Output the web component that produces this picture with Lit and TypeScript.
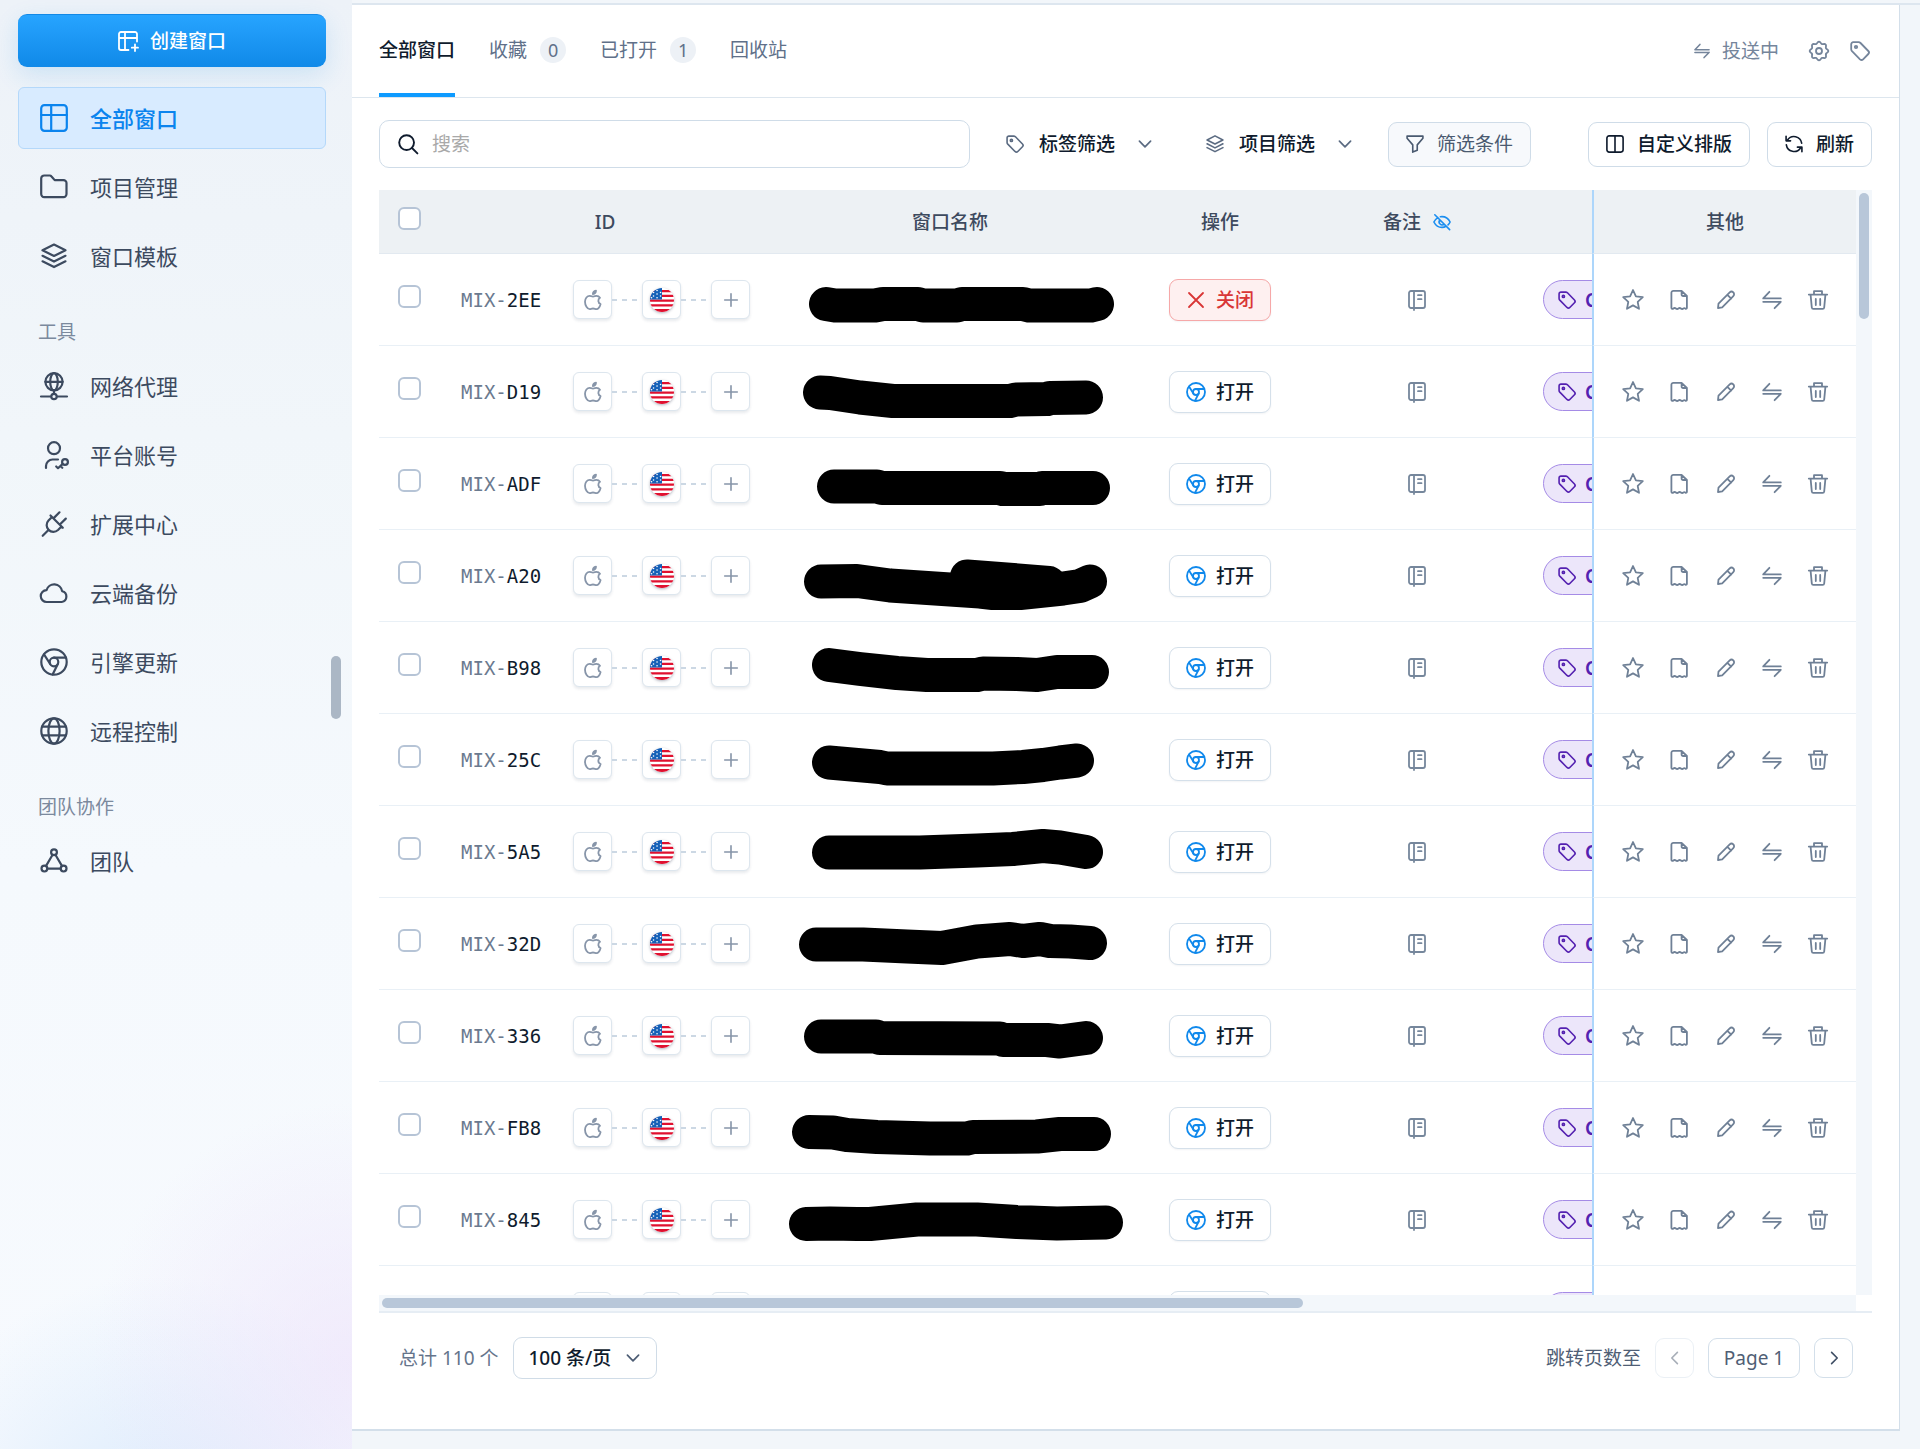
import { LitElement, html, svg, css } from "lit";
import { customElement } from "lit/decorators.js";
import { classMap } from "lit/directives/class-map.js";
import { styleMap } from "lit/directives/style-map.js";

/* Closed outline of a gear with eight rounded teeth, centred on a 20px grid. */
const gearOutline = Array.from({ length: 96 }, (_, i) => {
  const angle = (i / 96) * Math.PI * 2;
  const radius = 8.4 + 0.9 * Math.cos(8 * angle);
  return `${(10 + radius * Math.sin(angle)).toFixed(2)},${(10 - radius * Math.cos(angle)).toFixed(2)}`;
}).join(" ");

/* Outline icons, keyed by name. The large set is drawn on a 28px grid, the small set on a 20px grid. */
const largeIcons: Record<string, unknown> = {
  table: svg`<rect x="1.2" y="1.2" width="25.6" height="25.6" rx="3.2"/><path d="M11.2 1.2v25.6M1.2 11h25.6"/>`,
  folder: svg`<path d="M4.2 2.5h5.6c.6 0 1.1.2 1.5.7l3.4 3.9h8.8a3 3 0 0 1 3 3v11a3 3 0 0 1-3 3H4.2a3 3 0 0 1-3-3V5.500a3 3 0 0 1 3-3z"/>`,
  layers: svg`<path d="M14 2.500 25.500 8.300 14 14 2.500 8.300z"/><path d="M2.500 13.800 14 19.600l11.500-5.800M2.500 19.300 14 25.100l11.500-5.800"/>`,
  proxy: svg`<circle cx="14" cy="9.800" r="8.600"/><ellipse cx="14" cy="9.800" rx="3.800" ry="8.600"/><path d="M5.400 9.800h17.200M14 18.400v3.200M1 24.500h10M17 24.500h10"/><circle cx="14" cy="24.500" r="2.700"/>`,
  account: svg`<circle cx="14" cy="7.200" r="6"/><path d="M6 27v-2a6.500 6.500 0 0 1 6.500-6.500H18"/><circle cx="25" cy="21" r="2.900"/><path d="M22.700 22.900 18 27.200l-1.800-1.700M20.500 25l1.800 1.800"/>`,
  plug: svg`<path d="M10.500 5.500 22.800 17.800M12 7l-3.500 3.500a6.720 6.720 0 0 0 9.500 9.500l3.500-3.500M2.700 25.800l5.500-5.500M14.200 7.600l5.300-5.300M20.600 13.800l5.200-5.200"/>`,
  cloud: svg`<path d="M6.800 23a5.900 5.900 0 0 1-.3-11.800 8 8 0 0 1 15.600 1 5.500 5.500 0 0 1-.4 10.800z"/>`,
  engine: svg`<circle cx="14" cy="14" r="12.700"/><circle cx="14" cy="14" r="4.300"/><path d="M14 9.700h11.800M10.200 16 4 6.400M17.700 16.200 12.600 26.600"/>`,
  globe: svg`<circle cx="14" cy="14" r="12.700"/><ellipse cx="14" cy="14" rx="5.600" ry="12.700"/><path d="M2.200 9.600h23.600M2.200 18.400h23.600"/>`,
  team: svg`<circle cx="14" cy="5.200" r="2.900"/><circle cx="4.400" cy="21.600" r="2.900"/><circle cx="23.600" cy="21.600" r="2.900"/><path d="M12.600 7.800 5.900 19.100M15.400 7.800l6.700 11.300M7.300 21.600h13.400"/>`,
};

const smallIcons: Record<string, unknown> = {
  create: svg`<path d="M19 10.500V3a2 2 0 0 0-2-2H3a2 2 0 0 0-2 2v14a2 2 0 0 0 2 2h7.500M7 1v18M1 7h18M17 13.500v6.500M13.800 16.700H20"/>`,
  swap: svg`<path d="M1.200 8.400h17.600M1.200 8.400 7.400 1.800M18.800 11.800H1.200M18.800 11.800l-6.200 6.400"/>`,
  gear: svg`<circle cx="10" cy="10" r="3"/><polygon points=${gearOutline}/>`,
  tag: svg`<path d="M1.200 3.200v5c0 .8.300 1.400.8 2l8 8.100c1 .9 2.200.9 3.100 0l5.200-5.300c.9-.9.900-2.100 0-3l-7.800-8A2.800 2.800 0 0 0 8.400 1.200H3.200a2 2 0 0 0-2 2z"/><circle cx="6" cy="6" r="1.200"/>`,
  search: svg`<circle cx="8.600" cy="8.600" r="7.400"/><path d="M14 14l5.400 5.400"/>`,
  layers: svg`<path d="M10 1 18.800 5.500 10 10 1.200 5.500z"/><path d="M1.200 9.800 10 14.300l8.800-4.500M1.200 14 10 18.500l8.800-4.500"/>`,
  funnel: svg`<path d="M1.200 1.200h17.600v2.500L12.500 11v6l-5 2v-8L1.200 3.700z"/>`,
  columns: svg`<rect x="1" y="1" width="18" height="18" rx="2.500"/><path d="M10 1v18"/>`,
  refresh: svg`<path d="M18.500 9A8.600 8.600 0 0 0 2.800 5.600M1.200 1.500v5h5M1.500 11a8.600 8.600 0 0 0 15.700 3.400M18.800 18.500v-5h-5"/>`,
  eyeoff: svg`<path d="M5.500 5.200C3.600 6.400 2 8 1 10c1.900 3.800 5.200 6 9 6 1.700 0 3.200-.4 4.600-1.200M8.200 4.200c.6-.1 1.200-.2 1.800-.2 3.800 0 7.100 2.200 9 6-.6 1.200-1.400 2.300-2.300 3.200M7.600 7.800a3.300 3.300 0 0 0 4.700 4.600M2 2l16.500 16.500"/>`,
  apple: svg`<path d="M10 6.700c1-.4 2-.9 3.300-.9 1.700 0 2.900.7 3.700 1.900-2.400 1.600-2.200 5.300.6 6.300-.7 2.600-2.400 5.100-4.200 5.100-1.200 0-1.800-.6-3.400-.6s-2.100.6-3.300.6C4.300 19.100 2 15.300 2 11.800 2 8.300 4.200 5.800 6.700 5.800c1.300 0 2.300.5 3.300.9zM9.900 4.100c0-2 1.200-3.200 3.100-3.500 0 2-1.200 3.300-3.100 3.500z"/>`,
  plus: svg`<path d="M10 3v14M3 10h14"/>`,
  close: svg`<path d="M3 3l14 14M17 3 3 17"/>`,
  engine: svg`<circle cx="10" cy="10" r="9"/><circle cx="10" cy="10" r="3"/><path d="M10 7h8.300M7.400 11.500 3 4.600M12.600 11.500 9 18.800"/>`,
  note: svg`<rect x="2" y="1" width="16" height="17" rx="2"/><path d="M7 1v19M11 5.200h3.500M11 9.200h3.500"/>`,
  star: svg`<path d="M10 0l2.900 6.400 6.900.8-5.100 4.700 1.300 6.900-6-3.400-6 3.400 1.300-6.900L.2 7.200l6.900-.8z"/>`,
  file: svg`<path d="M12.600.8H4.400a2 2 0 0 0-2 2v15c0 1.200 1.200 1.400 2 .7s1.800-.6 2.500 0 1.700.7 2.500 0 1.800-.6 2.500 0 1.700.7 2.500 0 1.300-.5 1.900 0 1.600.4 1.600-.7V6zM12.600 1v3.500c0 .9.600 1.500 1.500 1.500h3.600"/>`,
  pencil: svg`<path d="M2 18l.5-4.400L13.700 2.400c1.100-1.100 2.600-1 3.600 0s1.100 2.600 0 3.700L6.200 17.300zM11.400 4.800l3.800 3.800"/>`,
  trash: svg`<path d="M.8 4.600h18.400M6 4.400V1.200h8v3.200M2.600 4.800l1.200 12.700c.1.900.6 1.400 1.500 1.400h9.400c.9 0 1.400-.5 1.500-1.400l1.200-12.700M7.800 9v6M12.200 9v6"/>`,
  down: svg`<path d="M2 6l8 8 8-8"/>`,
  left: svg`<path d="M13 3l-7 7 7 7"/>`,
  right: svg`<path d="M7 3l7 7-7 7"/>`,
};

const large = (name: string) =>
  html`<svg class="icon large" viewBox="0 0 28 28" aria-hidden="true">${largeIcons[name]}</svg>`;
const small = (name: string, size = "") =>
  html`<svg class="icon small ${size}" viewBox="0 0 20 20" aria-hidden="true">${smallIcons[name]}</svg>`;

const flag = html`<svg class="flag" viewBox="0 0 24 24" role="img" aria-label="US">
  <rect width="24" height="24" fill="#fff" />
  <path d="M0 2h24v2.200H0zM0 6.700h24v2.300H0zM0 11.500h24v2.300H0zM0 16.200h24v2.300H0zM0 21h24v3H0z" fill="#e0102f" />
  <path d="M0 0h12v11.500H0z" fill="#1560b8" />
  <path d="M3.500 4.500h.1M7 2.500h.1M10.500 4.500h.1M7 6h.1M3.500 8h.1M10.500 8h.1M1.500 9.800h.1M7 9.800h.1" stroke="#fff" stroke-width="1.500" stroke-linecap="round" />
</svg>`;

interface NavItem { icon: string; text: string; active?: boolean }
const navGroups: { title?: string; items: NavItem[] }[] = [
  {
    items: [
      { icon: "table", text: "全部窗口", active: true },
      { icon: "folder", text: "项目管理" },
      { icon: "layers", text: "窗口模板" },
    ],
  },
  {
    title: "工具",
    items: [
      { icon: "proxy", text: "网络代理" },
      { icon: "account", text: "平台账号" },
      { icon: "plug", text: "扩展中心" },
      { icon: "cloud", text: "云端备份" },
      { icon: "engine", text: "引擎更新" },
      { icon: "globe", text: "远程控制" },
    ],
  },
  { title: "团队协作", items: [{ icon: "team", text: "团队" }] },
];

/* Each window: id suffix and the marker strokes that cover its name. */
interface WindowRow { id: string; strokes: string[]; open?: boolean }
const windows: WindowRow[] = [
  { id: "2EE", open: true, strokes: ["57,50 66,51.5 106,51.5 114,50 149,50 154,51.5 188,51.5 193,50 254,50 260,51.5 322,51.5 328,50"] },
  { id: "D19", strokes: ["51,46.5 61,47 91,51.5 124,55 241,55 247,53.5 278,53 281,52 317,51.5"] },
  { id: "ADF", strokes: ["65,48.5 108,48.5 113,50 231,50 234,51 271,51 273,50 324,50"] },
  { id: "A20", strokes: ["52,51.5 88,51 121,55.5 211,61.5 224,63 251,63 294,58.5 311,56 321,51.5", "198,46.5 244,50 280,53"] },
  { id: "B98", strokes: ["60,43 91,47 128,51 158,53 208,53 214,51.5 248,52 268,53 288,50 323,50"] },
  { id: "25C", strokes: ["60,48.5 111,53 118,54.5 224,54.5 254,53 274,51 291,48.5 308,46.5"] },
  { id: "5A5", strokes: ["60,46.5 151,46.5 208,44.5 244,43 274,40 291,41.5 317,46"] },
  { id: "32D", strokes: ["47,46.5 94,46.5 138,48.5 173,50 208,43.5 241,41 254,43 271,41 281,43 301,43.5 321,45"] },
  { id: "336", strokes: ["52,46.5 107,46.5 111,48 231,48.5 234,50 278,50 291,51.5 317,48"] },
  { id: "FB8", strokes: ["40,50 64,50.5 78,53 108,55 161,56.5 198,56.5 204,55 268,54.5 291,52 325,52"] },
  { id: "845", strokes: ["37,50 61,49.5 88,50 101,50 148,45.5 208,45.5 248,48 288,49.5 311,49 337,48.5"] },
  { id: "7C1", strokes: ["52,50 320,50"] },
];

const rowActions = [
  ["star", "收藏"],
  ["file", "详情"],
  ["pencil", "编辑"],
  ["swap", "投送"],
  ["trash", "删除"],
];

/* Share of the list that is in view, in percent, for the two scroll bars. */
const scrollShare = { x: 62.6, y: 11.5 };

const shared = css`
  * { box-sizing: border-box; }
  :host {
    font-family: "Noto Sans", "Noto Sans CJK SC", sans-serif;
    font-size: 19px;
    line-height: 28px;
    color: #0f1b2d;
  }
  button, input, select { font: inherit; color: inherit; margin: 0; }
  button { cursor: pointer; }
  a { color: inherit; text-decoration: none; }
  .icon { display: block; flex: none; fill: none; stroke: currentColor; stroke-linecap: round; stroke-linejoin: round; overflow: visible; }
  .large { width: 28px; height: 28px; stroke-width: 2.2; }
  .small { width: 18px; height: 18px; stroke-width: 1.8; }
  .s13 { width: 14px; height: 14px; stroke-width: 2.4; }
  .s16 { width: 16px; height: 16px; stroke-width: 2; }
  .s20 { width: 20px; height: 20px; }
`;

@customElement("side-nav")
class SideNav extends LitElement {
  static styles = [shared, css`
    :host {
      display: block;
      position: relative;
      padding: 14px 26px 14px 18px;
      overflow: hidden;
      background:
        radial-gradient(circle at 100% 94%, rgba(236, 224, 250, 0.6), rgba(240, 232, 251, 0) 260px),
        radial-gradient(circle at 45% 106%, rgba(214, 232, 252, 0.85), rgba(220, 235, 252, 0) 260px),
        linear-gradient(#edf2f8, #f1f6fa 30%, #f5f9fd 60%, #f7fafe);
    }
    .create {
      display: flex; align-items: center; justify-content: center; gap: 12px;
      width: 100%; height: 53px; border: 0; border-top: 1px solid #1389e6; border-radius: 9px;
      color: #fff; font-weight: 500;
      background: linear-gradient(#27a4ff, #1089e8);
      box-shadow: 0 8px 24px rgba(30, 140, 230, 0.16);
    }
    .group { display: flex; flex-direction: column; gap: 7px; margin: 20px 0 0; padding: 0; list-style: none; }
    .title { margin: 31px 0 0 20px; font-size: 19px; font-weight: 400; color: #7b899d; }
    .title + .group { margin-top: 9px; }
    .item {
      display: flex; align-items: center; gap: 22px; height: 62px; padding: 0 20px 1px 21px;
      border: 1px solid transparent; border-radius: 6px;
      font-size: 22px; color: #3c4a5f; font-weight: 400;
    }
    .active { color: #0b84ee; background: #d8ebff; border: 1px solid #b4d8fa; font-weight: 500; }
    .thumb { position: absolute; right: 11px; top: 656px; width: 10px; height: 63px; border-radius: 5px; background: #abb7c5; }
  `];
  render() {
    return html`
      <button class="create">${small("create", "s20")}创建窗口</button>
      <nav>
        ${navGroups.map((group) => html`
          ${group.title ? html`<h2 class="title">${group.title}</h2>` : ""}
          <ul class="group">
            ${group.items.map((item) => html`<li>
              <a href="#" class=${classMap({ item: true, active: !!item.active })}>${large(item.icon)}<span>${item.text}</span></a>
            </li>`)}
          </ul>`)}
      </nav>
      <div class="thumb"></div>
    `;
  }
}

@customElement("window-table")
class WindowTable extends LitElement {
  static styles = [shared, css`
    :host { display: grid; grid-template: minmax(0, 1fr) 16px / minmax(0, 1fr) 16px; min-height: 0; }
    .view { overflow: auto; scrollbar-width: none; }
    .track { background: #f3f7fb; padding: 3px; }
    .bar { border-radius: 5px; background: #b8c7d9; height: 10px; }
    .track.y .bar { width: 10px; height: auto; }
    table { table-layout: fixed; width: 2356px; border-collapse: separate; border-spacing: 0; }
    .c-check { width: 62px; } .c-id { width: 328px; } .c-name { width: 362px; }
    .c-run { width: 178px; } .c-note { width: 216px; } .c-tags { width: 946px; } .c-other { width: 264px; }
    th, td { padding: 0; text-align: center; vertical-align: middle; background: #fff; }
    th {
      position: sticky; top: 0; z-index: 2; height: 64px; color: #3d4a5e; font-weight: 500;
      background: #edf1f4; border-bottom: 1px solid #e2e9f0;
    }
    td { height: 92px; border-bottom: 1px solid #e9f0f6; }
    .pinned { position: sticky; right: 0; z-index: 1; border-left: 2px solid #add6fb; }
    th.pinned { z-index: 3; }
    .pick { text-align: left; padding: 0 0 6px 19px; }
    .pick input {
      appearance: none; display: block; width: 23px; height: 23px;
      border: 2px solid #b6c4d6; border-radius: 6px; background: #fff;
    }
    .note-head { display: flex; justify-content: center; align-items: center; gap: 12px; }
    .note-head button { color: #1b8ef0; }
    .bare { display: grid; place-items: center; padding: 0; border: 0; background: none; color: #6f8096; }
    .identity { display: flex; align-items: center; padding-left: 20px; }
    .code { width: 112px; text-align: left; font-family: "DejaVu Sans Mono", monospace; color: #6b7a8f; white-space: nowrap; }
    .code b { font-weight: 400; color: #0f1b2d; }
    .chip {
      display: grid; place-items: center; width: 39px; height: 39px; padding: 0; color: #8795a9;
      border: 1px solid #dde6ee; border-radius: 6px; background: #fff; box-shadow: 0 2px 3px rgba(30, 50, 80, 0.1);
    }
    .link { width: 30px; height: 2px; background: repeating-linear-gradient(90deg, #ccd8e4 0 5px, transparent 5px 10px); }
    .flag { display: block; width: 24px; height: 24px; border-radius: 50%; box-shadow: 0 1px 3px rgba(20, 30, 60, 0.35); }
    .marks { display: block; width: 362px; height: 91px; fill: none; stroke: #000; stroke-width: 34; stroke-linecap: round; stroke-linejoin: round; }
    .run {
      display: inline-flex; align-items: center; gap: 10px; height: 42px; padding: 0 16px; vertical-align: middle;
      border: 1px solid #d5e0ea; border-radius: 9px; background: #fff; font-weight: 500;
      box-shadow: 0 1px 2px rgba(30, 50, 80, 0.06);
    }
    .run .icon { color: #1089ec; }
    .run.stop { color: #d93636; background: #fef0f0; border-color: #f6a8a8; }
    .run.stop .icon { color: #d93636; }
    .bare.note { margin: 0 auto; color: #76879c; }
    .tags { padding-left: 18px; }
    .tag {
      display: flex; align-items: center; gap: 9px; width: max-content; height: 39px; padding: 0 15px 0 14px;
      border: 1px solid #a58be6; border-radius: 20px; background: #ece6fa; color: #5421b0; font-weight: 600;
    }
    .actions { display: flex; justify-content: space-between; padding: 0 28px 0 29px; }
  `];
  render() {
    return html`
      <div class="view">
        <table>
          <colgroup>
            <col class="c-check"><col class="c-id"><col class="c-name"><col class="c-run">
            <col class="c-note"><col class="c-tags"><col class="c-other">
          </colgroup>
          <thead>
            <tr>
              <th class="pick"><input type="checkbox" aria-label="全选"></th>
              <th>ID</th>
              <th>窗口名称</th>
              <th>操作</th>
              <th><div class="note-head">备注<button class="bare" aria-label="隐藏备注">${small("eyeoff")}</button></div></th>
              <th></th>
              <th class="pinned">其他</th>
            </tr>
          </thead>
          <tbody>${windows.map((row) => this.row(row))}</tbody>
        </table>
      </div>
      <div class="track y"><div class="bar" style=${styleMap({ height: `${scrollShare.y}%` })}></div></div>
      <div class="track"><div class="bar" style=${styleMap({ width: `${scrollShare.x}%` })}></div></div>
    `;
  }
  row(row: WindowRow) {
    return html`<tr>
      <td class="pick"><input type="checkbox" aria-label="MIX-${row.id}"></td>
      <td>
        <div class="identity">
          <span class="code">MIX-<b>${row.id}</b></span>
          <button class="chip" aria-label="macOS">${small("apple", "s20")}</button>
          <span class="link"></span>
          <button class="chip" aria-label="代理">${flag}</button>
          <span class="link"></span>
          <button class="chip" aria-label="添加">${small("plus")}</button>
        </div>
      </td>
      <td><svg class="marks" viewBox="0 0 362 91" aria-hidden="true">${row.strokes.map((s) => svg`<polyline points=${s} />`)}</svg></td>
      <td>${row.open
        ? html`<button class="run stop">${small("close", "s20")}关闭</button>`
        : html`<button class="run">${small("engine", "s20")}打开</button>`}</td>
      <td><button class="bare note" aria-label="备注">${small("note", "s20")}</button></td>
      <td class="tags"><span class="tag">${small("tag")}C</span></td>
      <td class="pinned"><div class="actions">${rowActions.map(([icon, name]) =>
        html`<button class="bare" aria-label=${name}>${small(icon, "s20")}</button>`)}</div></td>
    </tr>`;
  }
}

@customElement("app-root")
class AppRoot extends LitElement {
  static styles = [shared, css`
    :host { display: grid; grid-template-columns: 352px minmax(0, 1fr); height: 100vh; background: #f2f6fa; }
    .stage { display: flex; min-width: 0; min-height: 0; margin-top: 3px; padding: 0 20px 18px 0; border-top: 2px solid #dde6ef; }
    .panel {
      flex: 1; display: flex; flex-direction: column; min-width: 0;
      background: #fff; border: solid #d3dfea; border-width: 0 1px 2px 0;
    }
    .head { display: flex; align-items: stretch; height: 93px; padding: 0 29px 0 27px; border-bottom: 1px solid #dde6ee; }
    .tabs { display: flex; gap: 34px; flex: 1; }
    .tab {
      display: flex; align-items: center; gap: 13px; padding: 2px 0 0; border: 0; border-bottom: 4px solid transparent;
      background: none; color: #607089; white-space: nowrap;
    }
    .tab.on { color: #0f1b2d; font-weight: 500; border-color: #0e9bff; }
    .badge { width: 26px; height: 26px; border-radius: 13px; background: #edf1f6; font-size: 18px; line-height: 26px; text-align: center; }
    .tools { display: flex; align-items: center; gap: 21px; color: #75859b; }
    .tool { display: flex; align-items: center; gap: 12px; padding: 0; border: 0; background: none; }
    .tool.wide { margin-right: 9px; }
    .body { flex: 1; display: flex; flex-direction: column; min-height: 0; padding: 0 27px; }
    .filters { display: flex; align-items: center; gap: 18px; padding: 22px 0; }
    .search {
      flex: 1; display: flex; align-items: center; gap: 14px; min-width: 0; height: 48px; padding: 0 18px;
      border: 1px solid #cfdce8; border-radius: 10px;
    }
    .search .icon { stroke-width: 1.9; }
    .search input { flex: 1; min-width: 0; border: 0; outline: 0; padding: 0; background: none; }
    .search input::placeholder { color: #a9a9a9; opacity: 1; }
    /* Icon, select and chevron share one row; the select spans it so that all of it is clickable. */
    .drop { display: grid; grid-template-columns: 18px auto 14px; align-items: center; padding: 0 18px; color: #5b6b82; }
    .drop select {
      grid-area: 1 / 1 / 2 / 4; appearance: none; height: 45px; padding: 0 36px 0 33px;
      border: 0; background: none; color: #0f1b2d; font-weight: 500;
    }
    .drop > .icon { grid-row: 1; pointer-events: none; }
    .drop > .icon:first-of-type { grid-column: 1; }
    .drop > .icon:last-of-type { grid-column: 3; }
    .boxed { display: grid; align-items: center; color: #4c5c73; }
    .boxed select {
      grid-area: 1 / 1; appearance: none; height: 42px; padding: 0 45px 0 14px;
      border: 1px solid #d0dce7; border-radius: 9px; background: #fff; color: #0f1b2d; font-weight: 500;
    }
    .boxed .icon { grid-area: 1 / 1; justify-self: end; margin-right: 17px; pointer-events: none; }
    .btn {
      display: flex; align-items: center; gap: 13px; height: 45px; padding: 0 17px; white-space: nowrap;
      border: 1px solid #cfdce8; border-radius: 9px; background: #fff; font-weight: 500;
    }
    .btn.muted { color: #4a5a70; background: #f7f9fc; font-weight: 400; }
    .views { display: flex; gap: 17px; margin-left: 39px; }
    window-table { flex: 1; }
    .foot {
      display: flex; align-items: center; gap: 15px; padding: 24px 19px 50px 20px;
      border-top: 2px solid #e6edf4; color: #65748b;
    }
    .pager { display: flex; align-items: center; gap: 14px; margin-left: auto; color: #4f5e75; }
    .step { display: grid; place-items: center; width: 39px; height: 40px; padding: 0; border: 1px solid #d3dfea; border-radius: 9px; background: #fff; color: #3f4e64; }
    .step:disabled { opacity: 0.45; }
    .page { width: 92px; height: 40px; padding: 0; border: 1px solid #d3dfea; border-radius: 9px; text-align: center; background: #fff; }
  `];
  render() {
    return html`
      <side-nav></side-nav>
      <div class="stage">
        <main class="panel">
          <header class="head">
            <div class="tabs" role="tablist">
              <button class="tab on" role="tab" aria-selected="true">全部窗口</button>
              <button class="tab" role="tab">收藏<span class="badge">0</span></button>
              <button class="tab" role="tab">已打开<span class="badge">1</span></button>
              <button class="tab" role="tab">回收站</button>
            </div>
            <div class="tools">
              <button class="tool wide">${small("swap", "s16")}投送中</button>
              <button class="tool" aria-label="设置">${small("gear", "s20")}</button>
              <button class="tool" aria-label="标签">${small("tag", "s20")}</button>
            </div>
          </header>
          <div class="body">
            <div class="filters">
              <label class="search">${small("search", "s20")}<input type="search" placeholder="搜索" aria-label="搜索"></label>
              ${this.drop("tag", "标签筛选")}
              ${this.drop("layers", "项目筛选")}
              <button class="btn muted">${small("funnel")}筛选条件</button>
              <div class="views">
                <button class="btn">${small("columns")}自定义排版</button>
                <button class="btn">${small("refresh")}刷新</button>
              </div>
            </div>
            <window-table></window-table>
            <footer class="foot">
              <span>总计 110 个</span>
              <label class="boxed">
                <select aria-label="每页条数"><option>100 条/页</option></select>
                ${small("down", "s13")}
              </label>
              <div class="pager">
                <label for="page">跳转页数至</label>
                <button class="step" disabled aria-label="上一页">${small("left", "s16")}</button>
                <input class="page" id="page" value="Page 1">
                <button class="step" aria-label="下一页">${small("right", "s16")}</button>
              </div>
            </footer>
          </div>
        </main>
      </div>
    `;
  }
  drop(icon: string, text: string) {
    return html`<label class="drop">
      ${small(icon)}
      <select aria-label=${text}><option>${text}</option></select>
      ${small("down", "s13")}
    </label>`;
  }
}
